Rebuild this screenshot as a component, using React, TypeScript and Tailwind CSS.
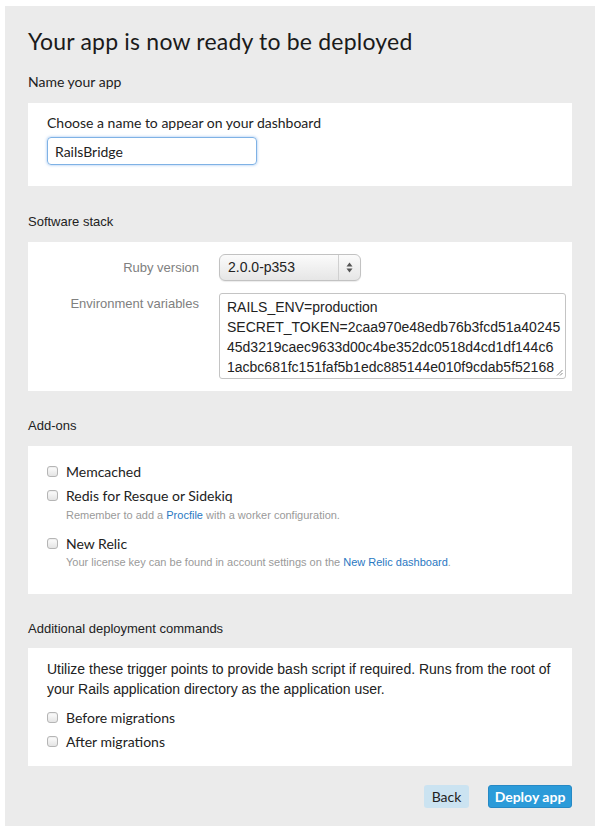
import React from 'react';

const proxima = "font-['Lato','Open_Sans',sans-serif]";
const helv = "font-['Liberation_Sans','Arial',sans-serif]";

function Checkbox({ label }: { label: string }) {
  return (
    <label className="flex items-center h-5">
      <span className="w-[11px] h-[11px] rounded-[3px] border border-[#b5b5b5] bg-gradient-to-b from-[#fdfdfd] to-[#e4e4e4] shadow-[inset_0_1px_1px_rgba(0,0,0,0.06)]" />
      <span className={`ml-[8px] text-[14px] text-[#222] ${proxima}`}>{label}</span>
    </label>
  );
}

function SectionTitle({ children }: { children: React.ReactNode }) {
  return <h2 className={`text-[13px] leading-5 text-[#222] ${helv}`}>{children}</h2>;
}

export default function App() {
  const env = [
    'RAILS_ENV=production',
    'SECRET_TOKEN=2caa970e48edb76b3fcd51a40245',
    '45d3219caec9633d00c4be352dc0518d4cd1df144c6',
    '1acbc681fc151faf5b1edc885144e010f9cdab5f52168',
    'a1b2c3d4e5f6',
  ].join('\n');

  return (
    <div className="bg-white min-h-[831px] pt-[6px] px-[5px]">
      <div className="bg-[#ebebeb] px-[23px] pt-[20px] pb-[18px]">
        <h1 className={`text-[23px] leading-[30px] tracking-[0.2px] text-[#1a1a1a] ${proxima}`}>
          Your app is now ready to be deployed
        </h1>

        <div className="mt-[16px] mb-[11px]">
          <h2 className={`text-[14px] leading-5 text-[#222] ${proxima}`}>Name your app</h2>
        </div>
        <div className="bg-white px-[19px] pt-[10px] pb-[21px]">
          <p className={`text-[14px] leading-5 text-[#222] ${proxima}`}>Choose a name to appear on your dashboard</p>
          <input
            defaultValue="RailsBridge"
            className={`mt-[4px] w-[210px] h-[28px] px-[7px] rounded-[4px] border border-[#7fb2e5] shadow-[0_0_3px_rgba(80,150,230,0.6)] outline-none text-[14px] text-[#222] ${proxima}`}
          />
        </div>

        <div className="mt-[26px] mb-[10px]">
          <SectionTitle>Software stack</SectionTitle>
        </div>
        <div className="bg-white pt-[12px] pb-[12px] pr-[6px]">
          <div className="flex items-center">
            <div className={`w-[171px] text-right text-[13px] text-[#808080] ${helv}`}>Ruby version</div>
            <div className="ml-[20px] w-[142px] h-[27px] rounded-[6px] border border-[#c2c2c2] bg-gradient-to-b from-[#fbfbfb] to-[#e6e6e6] shadow-[0_1px_1px_rgba(0,0,0,0.08)] flex items-center">
              <span className={`flex-1 pl-[8px] text-[14px] text-[#222] ${helv}`}>2.0.0-p353</span>
              <span className="w-[22px] h-full border-l border-[#d0d0d0] flex items-center justify-center">
                <svg width="7" height="11" viewBox="0 0 7 11">
                  <path d="M3.5 0.5 L6.5 4.5 H0.5 Z" fill="#555" />
                  <path d="M3.5 10.5 L6.5 6.5 H0.5 Z" fill="#555" />
                </svg>
              </span>
            </div>
          </div>
          <div className="flex items-start mt-[12px]">
            <div className={`w-[171px] pt-[1px] text-right text-[13px] text-[#808080] ${helv}`}>Environment variables</div>
            <div className="ml-[20px] flex-1 relative">
              <textarea
                readOnly
                value={env}
                wrap="off"
                className={`block w-full h-[86px] resize-none overflow-hidden whitespace-pre rounded-[3px] border border-[#c4c4c4] px-[7px] pt-[3px] text-[14px] leading-5 text-[#222] outline-none ${helv}`}
              />
              <svg className="absolute right-[3px] bottom-[3px]" width="7" height="7" viewBox="0 0 7 7">
                <path d="M6.5 1 L1 6.5 M6.5 4 L4 6.5" stroke="#888" strokeWidth="1" />
              </svg>
            </div>
          </div>
        </div>

        <div className="mt-[25px] mb-[10px]">
          <SectionTitle>Add-ons</SectionTitle>
        </div>
        <div className="bg-white px-[19px] pt-[15px] pb-[24px]">
          <Checkbox label="Memcached" />
          <div className="mt-[4px]">
            <Checkbox label="Redis for Resque or Sidekiq" />
            <p className={`ml-[19px] mt-[2px] text-[11px] leading-4 text-[#9a9a9a] ${helv}`}>
              Remember to add a <a className="text-[#2a78c2]">Procfile</a> with a worker configuration.
            </p>
          </div>
          <div className="mt-[10px]">
            <Checkbox label="New Relic" />
            <p className={`ml-[19px] mt-[1px] text-[11px] leading-4 text-[#9a9a9a] ${helv}`}>
              Your license key can be found in account settings on the <a className="text-[#2a78c2]">New Relic dashboard</a>.
            </p>
          </div>
        </div>

        <div className="mt-[25px] mb-[9px]">
          <SectionTitle>Additional deployment commands</SectionTitle>
        </div>
        <div className="bg-white px-[19px] pt-[11px] pb-[15px]">
          <p className={`text-[14px] leading-5 text-[#222] ${helv}`}>
            Utilize these trigger points to provide bash script if required. Runs from the root of your Rails application directory as the application user.
          </p>
          <div className="mt-[8px]">
            <Checkbox label="Before migrations" />
          </div>
          <div className="mt-[4px]">
            <Checkbox label="After migrations" />
          </div>
        </div>

        <div className="flex justify-end gap-[19px] mt-[19px]">
          <button className={`w-[45px] h-[23px] rounded-[3px] bg-[#cbe3f1] text-[14px] text-[#222] ${proxima}`}>Back</button>
          <button className={`w-[84px] h-[23px] rounded-[3px] bg-[#2b9bd9] border border-[#2689c5] text-[14px] font-bold text-white ${proxima}`}>
            Deploy app
          </button>
        </div>
      </div>
    </div>
  );
}
